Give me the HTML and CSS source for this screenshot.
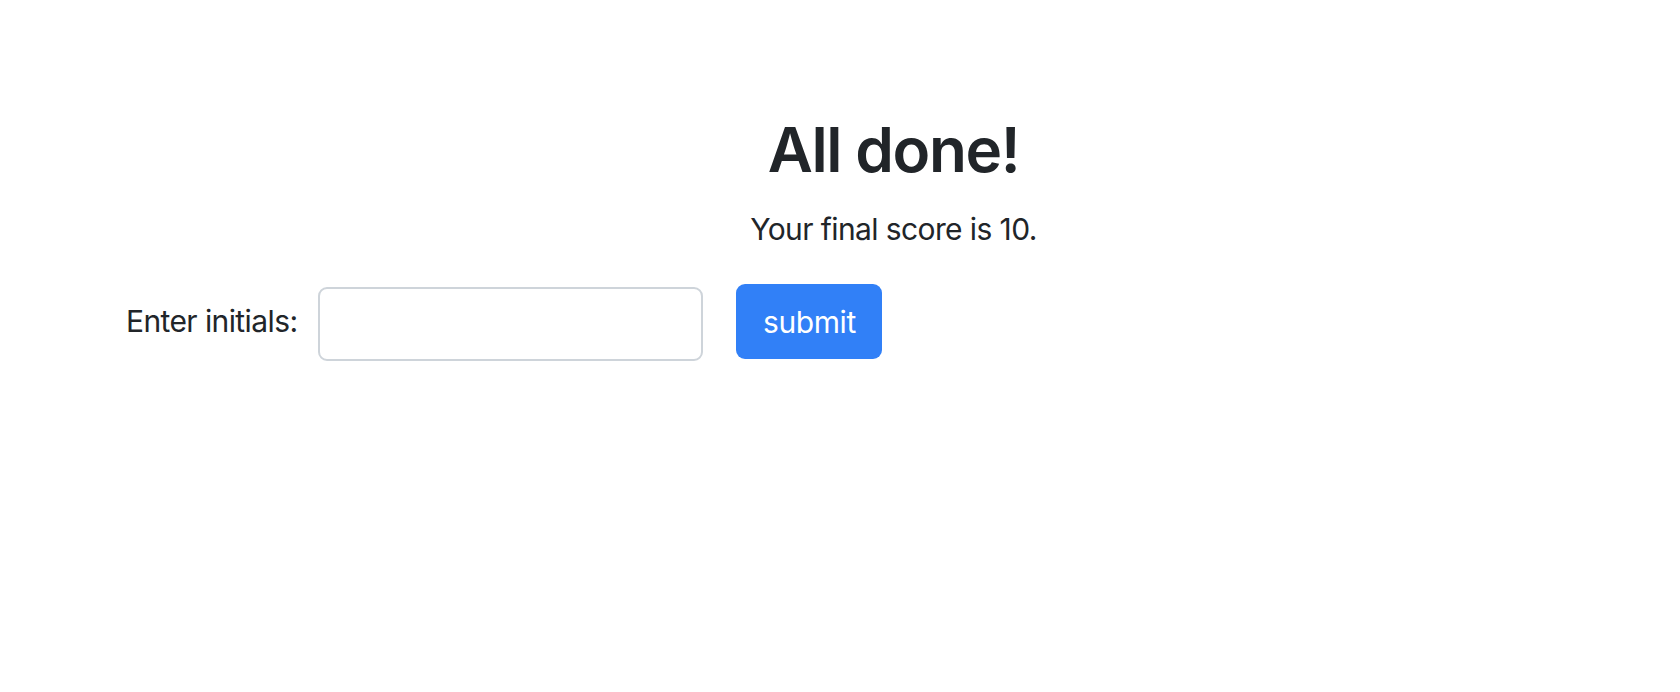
FILE: index.html
```html
<!DOCTYPE html>
<html lang="en">
<head>
<meta charset="utf-8">
<title>All done!</title>
<link rel="stylesheet" href="styles.css">
</head>
<body>
<main class="page">
  <section class="result">
    <h1 class="result-title">All done!</h1>
    <p class="result-score">Your final score is 10.</p>
  </section>
  <form class="initials-form">
    <label class="initials-label" for="initials">Enter initials:</label>
    <input class="initials-input" id="initials" type="text">
    <button class="submit-btn" type="button">submit</button>
  </form>
</main>
</body>
</html>
```
FILE: styles.css
```css
html, body {
  margin: 0;
  padding: 0;
  background: #ffffff;
}
body {
  font-family: Inter, "Noto Sans", "Liberation Sans", sans-serif;
  color: #212529;
}
.page {
  padding-top: 113px;
}
.result {
  margin-left: 107px;
  text-align: center;
}
.result-title {
  margin: 0;
  font-size: 62px;
  line-height: 74px;
  font-weight: 600;
  letter-spacing: -1.4px;
}
.result-score {
  margin: 20px 0 0;
  font-size: 30px;
  line-height: 45px;
  letter-spacing: -0.6px;
}
.initials-form {
  display: flex;
  align-items: center;
  margin-top: 30px;
  padding-left: 126px;
}
.initials-label {
  font-size: 30px;
  line-height: 45px;
  letter-spacing: -0.6px;
  margin-right: 21px;
}
.initials-input {
  box-sizing: border-box;
  width: 385px;
  height: 74px;
  margin-top: 5px;
  border: 2px solid #ced4da;
  border-radius: 9px;
  background: #fff;
  font: inherit;
  font-size: 30px;
  padding: 0 20px;
}
.submit-btn {
  box-sizing: border-box;
  margin-left: 33px;
  width: 146px;
  height: 75px;
  border: none;
  border-radius: 9px;
  background: #3180f7;
  color: #fff;
  font-family: inherit;
  font-size: 30px;
  letter-spacing: -0.4px;
  padding: 0;
}
```
